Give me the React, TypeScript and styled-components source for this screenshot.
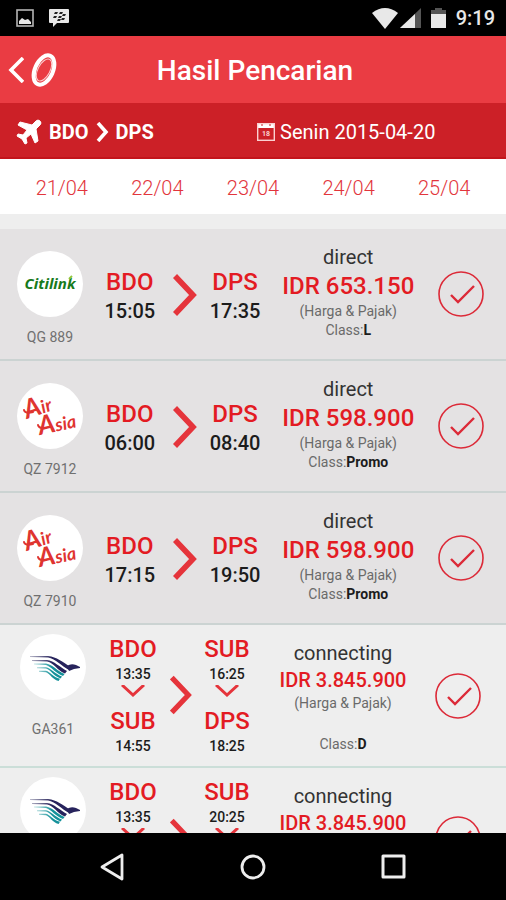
import React from "react";
import styled, { createGlobalStyle } from "styled-components";

const GlobalStyle = createGlobalStyle`
  *, *::before, *::after { box-sizing: border-box; }
  body { margin: 0; background: #000; font-family: Roboto, "Liberation Sans", sans-serif; }
  button { font: inherit; color: inherit; background: none; border: 0; padding: 0; margin: 0; cursor: pointer; }
  svg { display: block; }
`;

const Screen = styled.div`
  display: flex;
  flex-direction: column;
  height: 100vh;
  overflow: hidden;
  background: #eeeeee;
`;

const StatusBar = styled.div`
  flex: none;
  display: flex;
  justify-content: space-between;
  align-items: center;
  height: 36px;
  padding: 0 11px 0 16px;
  background: #000;
  color: #e8e8e8;
  font-size: 20px;
  font-weight: 500;
`;

const StatusGroup = styled.div<{ $gap: number }>`
  display: flex;
  align-items: center;
  gap: ${(p) => p.$gap}px;
`;

const Header = styled.header`
  flex: none;
  display: grid;
  grid-template-columns: 60px 1fr 60px;
  align-items: center;
  height: 67px;
  background: #ea3c43;
  color: #fff;
`;

const BackButton = styled.button`
  display: flex;
  align-items: center;
  gap: 6px;
  padding-left: 8px;
`;

const Title = styled.h1`
  margin: 0;
  padding: 2px 0 0 4px;
  text-align: center;
  font-size: 28px;
  line-height: 32px;
  font-weight: 500;
`;

const RouteBar = styled.div`
  flex: none;
  display: grid;
  grid-template-columns: 1fr 1fr;
  align-items: center;
  height: 56px;
  padding-top: 4px;
  background: #cc2027;
  border-bottom: 2px solid #c3141b;
  color: #fff;
  font-size: 20px;
`;

const Route = styled.div`
  display: flex;
  align-items: center;
  padding-left: 16px;
  gap: 7px;
  font-weight: 700;
`;

const TravelDate = styled.div`
  display: flex;
  align-items: center;
  gap: 5px;
  padding-left: 4px;
`;

const DateTabs = styled.nav`
  flex: none;
  display: grid;
  grid-template-columns: repeat(5, 1fr);
  height: 55px;
  padding: 2px 14px 0;
  background: #fff;
`;

const DateTab = styled.button`
  color: #e2353c;
  font-size: 20px;
  font-weight: 300;
`;

const Results = styled.main`
  flex: 1;
  min-height: 0;
  overflow-y: auto;
  scrollbar-width: none;
  padding-top: 15px;
`;

const Flight = styled.article<{ $connecting: boolean }>`
  display: grid;
  grid-template-columns: ${(p) =>
    p.$connecting
      ? "106fr 54fr 42fr 50fr 182fr 48fr 24fr"
      : "100fr 60fr 50fr 50fr 176fr 50fr 20fr"};
  align-items: start;
  justify-items: center;
  padding-bottom: ${(p) => (p.$connecting ? 9 : 12)}px;
  background: ${(p) => (p.$connecting ? "#eeeeee" : "#e4e2e3")};
  border-bottom: 2px solid ${(p) => (p.$connecting ? "#cbded8" : "#cbd3d2")};
`;

const Airline = styled.div<{ $connecting: boolean }>`
  display: flex;
  flex-direction: column;
  align-items: center;
  gap: ${(p) => (p.$connecting ? 19 : 10)}px;
  padding-top: ${(p) => (p.$connecting ? 9 : 22)}px;
  color: #707070;
  font-size: 14px;
  line-height: 20px;
`;

const LogoDisc = styled.div`
  width: 66px;
  height: 66px;
  border-radius: 50%;
  background: #fff;
  overflow: hidden;
`;

const Stops = styled.div<{ $connecting: boolean }>`
  display: flex;
  flex-direction: column;
  align-items: center;
  gap: 10px;
  padding-top: ${(p) => (p.$connecting ? 10 : 39)}px;
`;

const Stop = styled.div`
  display: flex;
  flex-direction: column;
  align-items: center;
`;

const Airport = styled.div`
  color: #e31b23;
  font-size: 24px;
  line-height: 28px;
  font-weight: 500;
`;

const Time = styled.time<{ $small: boolean }>`
  color: #1c1c1c;
  font-size: ${(p) => (p.$small ? 14 : 20)}px;
  line-height: ${(p) => (p.$small ? 22 : 30)}px;
  font-weight: 500;
`;

const Arrow = styled.div<{ $connecting: boolean }>`
  padding-top: ${(p) => (p.$connecting ? 50 : 45)}px;
`;

const Fare = styled.div`
  display: flex;
  flex-direction: column;
  align-items: center;
  padding-top: 14px;
  color: #6a6a6a;
  font-size: 14px;
  line-height: 20px;
  white-space: nowrap;
`;

const Kind = styled.div`
  color: #333;
  font-size: 20px;
  line-height: 28px;
`;

const Price = styled.div<{ $connecting: boolean }>`
  color: #e31b23;
  font-size: ${(p) => (p.$connecting ? 20 : 24)}px;
  line-height: ${(p) => (p.$connecting ? 26 : 30)}px;
  font-weight: 500;
`;

const FareClass = styled.div<{ $connecting: boolean }>`
  padding-top: ${(p) => (p.$connecting ? 21 : 0)}px;
  line-height: ${(p) => (p.$connecting ? 20 : 19)}px;

  b { color: #1c1c1c; font-weight: 700; }
`;

const SelectButton = styled.button<{ $connecting: boolean }>`
  margin-top: ${(p) => (p.$connecting ? 48 : 42)}px;
`;

const SystemNav = styled.nav`
  flex: none;
  display: grid;
  grid-template-columns: 42px repeat(3, 1fr) 42px;
  align-items: center;
  justify-items: center;
  height: 67px;
  background: #000;

  button:first-child { grid-column: 2; }
`;

function Citilink() {
  return (
    <svg width="66" height="66" viewBox="0 0 66 66" role="img" aria-label="Citilink">
      <text x="33" y="38" textAnchor="middle" fontFamily="Noto Sans, sans-serif" fontSize="15" fontWeight="700" fontStyle="italic" fill="#177a1b">
        Citilink
      </text>
      <path d="M52 28l3-3" stroke="#8fc63d" strokeWidth="2" />
    </svg>
  );
}

function AirAsia() {
  return (
    <svg width="66" height="66" viewBox="0 0 66 66" role="img" aria-label="Air Asia">
      <g fill="#df3430" fontFamily="Lato, sans-serif" fontWeight="700" fontStyle="italic" fontSize="18">
        <text transform="translate(10 36) rotate(-19)"><tspan fontSize="26">A</tspan>ir</text>
        <text transform="translate(23 52) rotate(-12)"><tspan fontSize="26">A</tspan>sia</text>
      </g>
      <g fill="none" stroke="#df3430" strokeWidth="2" strokeLinecap="round">
        <path d="M7 27Q8 31 16 29" />
        <path d="M21 42Q22 46 29 45" />
      </g>
    </svg>
  );
}

function Garuda() {
  return (
    <svg width="66" height="66" viewBox="0 0 66 66" role="img" aria-label="Garuda Indonesia">
      <defs>
        <linearGradient id="navy" gradientUnits="userSpaceOnUse" x1="10" x2="32" y1="0" y2="0">
          <stop offset="0" stopColor="#b9b9c9" />
          <stop offset="1" stopColor="#27235c" />
        </linearGradient>
        <linearGradient id="teal" gradientUnits="userSpaceOnUse" x1="14" x2="32" y1="0" y2="0">
          <stop offset="0" stopColor="#c8e6e6" />
          <stop offset="1" stopColor="#14919a" />
        </linearGradient>
      </defs>
      <g fill="url(#navy)">
        <path d="M10 22H28C37 23 42 28 51 33L49 36C41 32 36 25 28 23.6L10 23Z" />
        <path d="M12 26H27C34 27 40 33 47 37L45 39.6C37 36 34 29 27 27.4L12 27Z" />
      </g>
      <path d="M47 32Q51 29 56 31L60 33L60 34L54 35L49 37Z" fill="#27235c" />
      <g fill="url(#teal)">
        <path d="M14 29.6H26C33 31 37 37 44.6 40L43 42C35 39 32 33 26 31L14 30.6Z" />
        <path d="M17 33.2H26C31 34 35 40 42 42.4L40.6 44.4C33 42 31 36 26 34.6L17 34.2Z" />
        <path d="M19 36.8H26C30 38 33 43 40 44.8L38.6 47C32 45 30 39.6 26 38.2L19 37.8Z" />
      </g>
    </svg>
  );
}

const logos = { citilink: Citilink, airasia: AirAsia, garuda: Garuda };

type StopInfo = [string, string];
interface FlightInfo {
  logo: keyof typeof logos;
  code: string;
  from: StopInfo[];
  to: StopInfo[];
  price: string;
  fareClass: string;
}

const flights: FlightInfo[] = [
  { logo: "citilink", code: "QG 889", from: [["BDO", "15:05"]], to: [["DPS", "17:35"]], price: "653.150", fareClass: "L" },
  { logo: "airasia", code: "QZ 7912", from: [["BDO", "06:00"]], to: [["DPS", "08:40"]], price: "598.900", fareClass: "Promo" },
  { logo: "airasia", code: "QZ 7910", from: [["BDO", "17:15"]], to: [["DPS", "19:50"]], price: "598.900", fareClass: "Promo" },
  { logo: "garuda", code: "GA361", from: [["BDO", "13:35"], ["SUB", "14:55"]], to: [["SUB", "16:25"], ["DPS", "18:25"]], price: "3.845.900", fareClass: "D" },
  { logo: "garuda", code: "GA361", from: [["BDO", "13:35"], ["SUB", "14:55"]], to: [["SUB", "20:25"], ["DPS", "22:25"]], price: "3.845.900", fareClass: "D" },
];

function StopList({ stops }: { stops: StopInfo[] }) {
  const connecting = stops.length > 1;
  return (
    <Stops $connecting={connecting}>
      {stops.map(([airport, time], i) => (
        <Stop key={airport}>
          <Airport>{airport}</Airport>
          <Time $small={connecting}>{time}</Time>
          {i < stops.length - 1 && (
            <svg width="24" height="12" viewBox="0 0 24 12" aria-hidden="true">
              <path d="M1 0L12 10L23 0" fill="none" stroke="#e5343b" strokeWidth="3" />
            </svg>
          )}
        </Stop>
      ))}
    </Stops>
  );
}

function FlightRow({ flight }: { flight: FlightInfo }) {
  const connecting = flight.from.length > 1;
  const Logo = logos[flight.logo];
  return (
    <Flight $connecting={connecting}>
      <Airline $connecting={connecting}>
        <LogoDisc><Logo /></LogoDisc>
        <span>{flight.code}</span>
      </Airline>
      <StopList stops={flight.from} />
      <Arrow $connecting={connecting}>
        <svg width={connecting ? 22 : 24} height={connecting ? 40 : 42} viewBox="0 0 24 42" aria-hidden="true">
          <path d="M2 2L20 21L2 40" fill="none" stroke="#e5343b" strokeWidth="5.6" />
        </svg>
      </Arrow>
      <StopList stops={flight.to} />
      <Fare>
        <Kind>{connecting ? "connecting" : "direct"}</Kind>
        <Price $connecting={connecting}>IDR {flight.price}</Price>
        <span>(Harga &amp; Pajak)</span>
        <FareClass $connecting={connecting}>Class:<b>{flight.fareClass}</b></FareClass>
      </Fare>
      <SelectButton $connecting={connecting} aria-label={`Pilih ${flight.code}`}>
        <svg width="46" height="46" viewBox="0 0 46 46" fill="none" stroke="#dc2a38">
          <circle cx="23" cy="23" r="22" strokeWidth="1.6" />
          <path d="M13 24L20 31L36 15" strokeWidth="2.4" />
        </svg>
      </SelectButton>
    </Flight>
  );
}

export default function App() {
  return (
    <Screen>
      <GlobalStyle />
      <StatusBar>
        <StatusGroup $gap={15}>
          <svg width="18" height="18" viewBox="0 0 18 18">
            <rect x="1" y="1" width="16" height="16" fill="none" stroke="#b5b5b5" strokeWidth="1.6" />
            <path d="M3 15V12L6 9L9 11L12 10L15 13V15Z" fill="#e8e8e8" />
          </svg>
          <svg width="20" height="18" viewBox="0 0 20 18">
            <path d="M1 0H19Q20 0 20 1V13Q20 14 19 14H8L4 18V14H1Q0 14 0 13V1Q0 0 1 0Z" fill="#e8e8e8" />
            <path d="M6 3h3l-1 2h-3zM11 3h3l-1 2h-3zM5 7h3l-1 2h-3zM10 7h3l-1 2h-3zM14 5h3l-1 2h-3zM9 10h3l-1 2h-3zM13 9h3l-1 2h-3z" fill="#222" />
          </svg>
        </StatusGroup>
        <StatusGroup $gap={10}>
          <StatusGroup $gap={2}>
            <svg width="26" height="21" viewBox="0 0 26 21"><path d="M0 5Q13 -5 26 5L13 21Z" fill="#e8e8e8" /></svg>
            <svg width="21" height="20" viewBox="0 0 21 20">
              <path d="M0 20L21 0V20Z" fill="#555" />
              <path d="M0 20L15 6V20Z" fill="#e8e8e8" />
            </svg>
          </StatusGroup>
          <svg width="15" height="20" viewBox="0 0 15 20">
            <path d="M4 0H11V2H15V6H0V2H4Z" fill="#555" />
            <path d="M0 6H15V20H0Z" fill="#e8e8e8" />
          </svg>
          <span>9:19</span>
        </StatusGroup>
      </StatusBar>

      <Header>
        <BackButton aria-label="Kembali">
          <svg width="16" height="26" viewBox="0 0 16 26" fill="none" stroke="#fff" strokeWidth="3.6">
            <path d="M15 1L3 13L15 25" />
          </svg>
          <svg width="28" height="36" viewBox="0 0 28 36" fill="none" stroke="#fff">
            <ellipse cx="14" cy="18" rx="9" ry="15.5" strokeWidth="4" transform="rotate(24 14 18)" />
            <ellipse cx="14" cy="18" rx="6" ry="12" strokeWidth="1" opacity=".75" transform="rotate(28 14 18)" />
          </svg>
        </BackButton>
        <Title>Hasil Pencarian</Title>
      </Header>

      <RouteBar>
        <Route>
          <svg width="26" height="26" viewBox="0 0 26 26" fill="#fff" stroke="#fff" strokeWidth="1" strokeLinejoin="round">
            <path d="M24 2Q22 0 20 2L16 6L4 3L2 6L11 11L7 16L2 15L1 17L6 20L9 25L11 24L10 19L15 15L19 24L22 22L20 10L24 6Q26 4 24 2Z" />
          </svg>
          <span>BDO</span>
          <svg width="13" height="20" viewBox="0 0 13 20" fill="none" stroke="#fff" strokeWidth="3.6">
            <path d="M2 1L10 10L2 19" />
          </svg>
          <span>DPS</span>
        </Route>
        <TravelDate>
          <svg width="18" height="18" viewBox="0 0 18 18">
            <path d="M0 0H18V5H0Z" fill="#fff" />
            <rect x=".7" y=".7" width="16.6" height="16.6" fill="none" stroke="#fbd0d0" strokeWidth="1.4" />
            <path d="M4 2h2M12 2h2" stroke="#cc2027" strokeWidth="1" />
            <text x="9" y="13" textAnchor="middle" fontSize="7" fontWeight="700" fill="#fbd0d0">18</text>
          </svg>
          <span>Senin 2015-04-20</span>
        </TravelDate>
      </RouteBar>

      <DateTabs aria-label="Tanggal">
        {["21/04", "22/04", "23/04", "24/04", "25/04"].map((d) => (
          <DateTab key={d}>{d}</DateTab>
        ))}
      </DateTabs>

      <Results>
        {flights.map((f, i) => (
          <FlightRow key={i} flight={f} />
        ))}
      </Results>

      <SystemNav aria-label="Navigasi">
        <button aria-label="Kembali">
          <svg width="26" height="28" viewBox="0 0 26 28" fill="none" stroke="#eee" strokeWidth="2.8" strokeLinejoin="round">
            <path d="M23 2V26L3 14Z" />
          </svg>
        </button>
        <button aria-label="Beranda">
          <svg width="26" height="26" viewBox="0 0 26 26" fill="none" stroke="#eee" strokeWidth="2.8">
            <circle cx="13" cy="13" r="11" />
          </svg>
        </button>
        <button aria-label="Terkini">
          <svg width="26" height="26" viewBox="0 0 26 26" fill="none" stroke="#eee" strokeWidth="3" strokeLinejoin="round">
            <rect x="2" y="2" width="21" height="21" />
          </svg>
        </button>
      </SystemNav>
    </Screen>
  );
}
